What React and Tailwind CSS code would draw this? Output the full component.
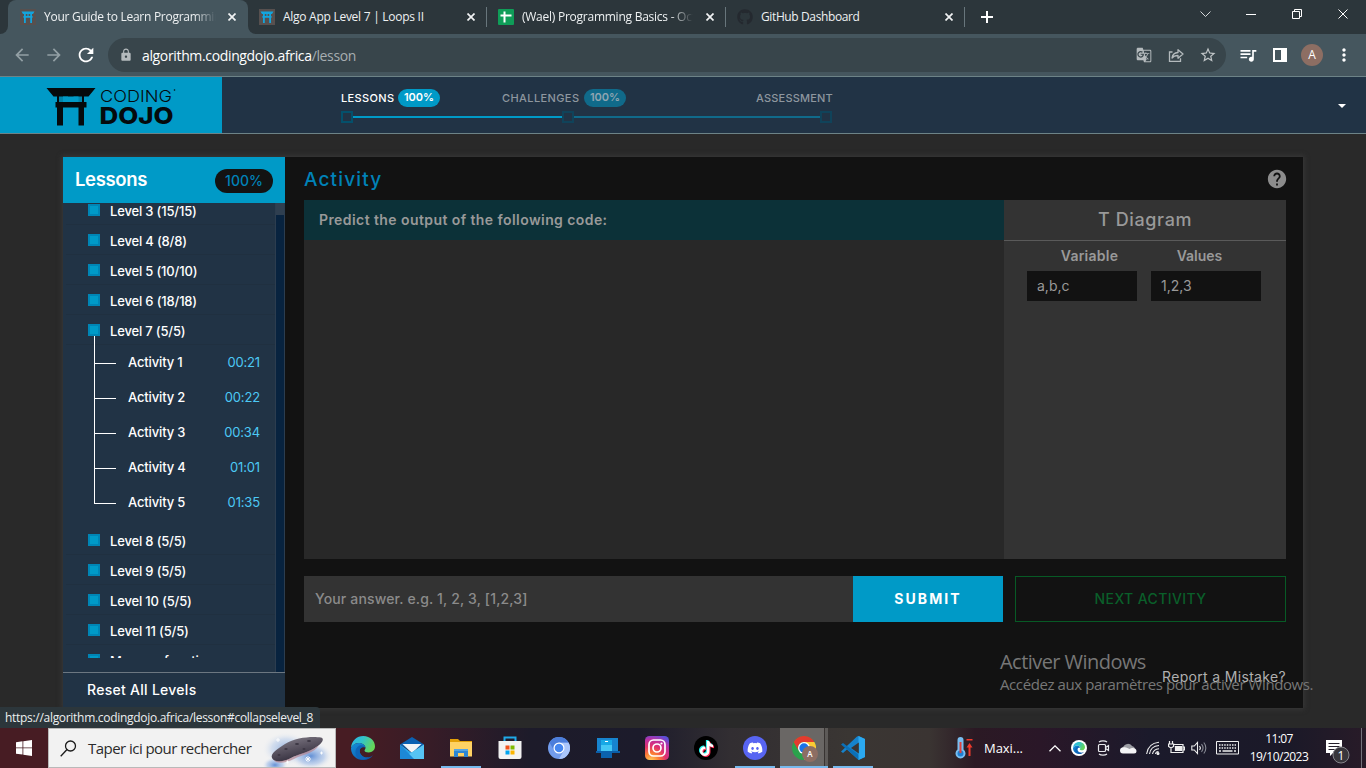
import React from "react";
import { MdArrowBack, MdArrowForward, MdRefresh, MdLock, MdGTranslate, MdStarBorder, MdQueueMusic, MdMoreVert, MdHelp } from "react-icons/md";
import { FaDiscord, FaGithub, FaTiktok } from "react-icons/fa6";

const SEGOE = "font-['Open_Sans','Noto_Sans',sans-serif]";
const GOTHAM = "font-[Inter,sans-serif]";

function Close() {
  return (
    <svg width="8" height="8" viewBox="0 0 8 8" className="shrink-0" stroke="#f1f3f4" strokeWidth="1.7">
      <path d="M.5 .5l7 7M7.5 .5l-7 7" />
    </svg>
  );
}

function ToriiFavicon() {
  return (
    <svg width="16" height="16" viewBox="0 0 16 16" className="shrink-0">
      <rect width="16" height="16" fill="#57504f" />
      <path d="M1.5 2.6h13L13 5H3zM4 5h1.8v9H4zM10.2 5H12v9h-1.800zM3.400 7h9.200v1.700H3.400zM7.400 4.500h1.200V7.500H7.400z" fill="#12a5dd" />
    </svg>
  );
}

function SheetFavicon() {
  return (
    <svg width="16" height="16" viewBox="0 0 16 16" className="shrink-0">
      <rect width="16" height="16" rx="1" fill="#0f9d58" />
      <path d="M2.500 6.500h11M6.500 2.500v11" stroke="#fff" strokeWidth="2" />
    </svg>
  );
}

function TabStrip() {
  return (
    <div className={`flex h-[34px] bg-[#2c363b] ${SEGOE} text-[12px] leading-[16px] text-[#eef1f2]`}>
      <div className="flex w-2 items-end bg-[#45565e]">
        <div className="h-full w-full rounded-br-lg bg-[#2c363b]" />
      </div>
      <div className="flex w-60 items-center rounded-t-lg bg-[#45565e] pl-3">
        <ToriiFavicon />
        <div className="ml-2 mr-[12px] w-[172px] overflow-hidden whitespace-nowrap tracking-[-0.27px] [mask-image:linear-gradient(to_right,#000_150px,transparent_172px)]">
          Your Guide to Learn Programming
        </div>
        <Close />
      </div>
      <div className="bg-[#45565e]">
        <div className="h-full w-2 rounded-bl-lg bg-[#2c363b]" />
      </div>
      <div className="flex w-[230px] items-center pl-[3px]">
        <ToriiFavicon />
        <div className="ml-2 w-[184px] whitespace-nowrap tracking-[-0.27px]">Algo App Level 7 | Loops II</div>
        <Close />
      </div>
      <div className="mt-[7px] h-5 w-px bg-[#68767c]" />
      <div className="flex w-[238px] items-center pl-[11px]">
        <SheetFavicon />
        <div className="ml-2 mr-[13px] w-[171px] overflow-hidden whitespace-nowrap tracking-[-0.25px] [mask-image:linear-gradient(to_right,#000_148px,transparent_171px)]">
          (Wael) Programming Basics - October
        </div>
        <Close />
      </div>
      <div className="mt-[7px] h-5 w-px bg-[#68767c]" />
      <div className="flex w-[238px] items-center pl-[11px]">
        <FaGithub className="size-4 shrink-0 text-[#24292f]" />
        <div className="ml-2 mr-[13px] w-[171px] whitespace-nowrap tracking-[-0.38px]">GitHub Dashboard</div>
        <Close />
      </div>
      <div className="mt-[7px] h-5 w-px bg-[#68767c]" />
      <svg width="12" height="12" viewBox="0 0 12 12" className="ml-4 mt-[11px]" stroke="#fff" strokeWidth="2">
        <path d="M6 0v12M0 6h12" />
      </svg>
      <svg width="170" height="34" viewBox="0 0 170 34" className="ml-auto" fill="none" stroke="#fff" strokeWidth="1">
        <path d="M4.500 11.500l5 5 5-5" stroke="#d5d8da" />
        <path d="M50 14.500h10" />
        <path d="M96.500 11.500h7v7h-7zM98.500 11.500v-2h7v7h-2" />
        <path d="M142.500 9.500l9 9M151.500 9.500l-9 9" />
      </svg>
    </div>
  );
}

function Toolbar() {
  return (
    <div className={`flex h-[42px] items-center bg-[#45565e] ${SEGOE}`}>
      <MdArrowBack className="ml-3 size-[20px] text-[#93a0a5]" />
      <MdArrowForward className="ml-3 size-[20px] text-[#93a0a5]" />
      <MdRefresh className="ml-[11px] size-[22px] text-white" />
      <div className="ml-[11px] flex h-[34px] w-[1118px] items-center rounded-full bg-[#38454b] pl-[11px]">
        <MdLock className="size-[14px] text-[#b4babd]" />
        <div className="ml-[9px] text-[14px] tracking-[-0.35px] text-white">
          algorithm.codingdojo.africa<span className="text-[#a7aeb1]">/lesson</span>
        </div>
        <MdGTranslate className="ml-auto size-4 text-[#b4babd]" />
        <svg width="16" height="16" viewBox="0 0 16 16" className="ml-[16px]" fill="none" stroke="#b4babd" strokeWidth="1.300">
          <path d="M4.500 5H1.500v9.300h11v-3" />
          <path d="M4 11c.5-3.800 2.500-5.300 6-5.500V2.700l5 4.300-5 4.200V8.500C7.500 8.500 5.500 9 4 11z" strokeLinejoin="round" />
        </svg>
        <MdStarBorder className="ml-[15px] mr-[9px] size-[18px] text-[#c0c5c7]" />
      </div>
      <MdQueueMusic className="ml-[12px] size-[20px] text-white" />
      <div className="ml-[15px] flex h-[14px] w-[14px] justify-end border-2 border-white">
        <div className="h-full w-[4px] bg-white" />
      </div>
      <div className="ml-[14px] flex size-[22px] items-center justify-center rounded-full bg-[#8d6e63] text-[12px] text-white">A</div>
      <MdMoreVert className="ml-[11px] size-[20px] text-white" />
    </div>
  );
}

function DojoLogo() {
  return (
    <svg width="222" height="56" viewBox="0 0 222 56" fontFamily="Inter, sans-serif" fill="#050a0c">
      <path d="M46.500 11h49l-7 8.500h-35zM57 19h6v29.500h-6zM78.500 19H84v29.500h-5.500zM55.500 25h31v5.500h-31z" />
      <path d="M59 19.500h9v5.500h-9zM73.500 19.500h8.500v5.500h-8.500z" fill="#009ac7" opacity=".85" />
      <text x="100" y="25" fontSize="16.500" textLength="72" lengthAdjust="spacingAndGlyphs" fontWeight="300">CODING</text>
      <text x="99.500" y="47" fontSize="23.500" textLength="74" lengthAdjust="spacingAndGlyphs" fontWeight="800">DOJO</text>
      <circle cx="174.500" cy="13" r=".8" />
    </svg>
  );
}

function Node({ className }) {
  return <div className={`size-3 border-2 ${className}`} />;
}

function SiteHeader() {
  return (
    <div className={`flex h-[58px] border-y border-[#6d8387] bg-[#213345] ${GOTHAM}`}>
      <div className="w-[222px] bg-[#009ac7]"><DojoLogo /></div>
      <div className="w-[492px] ml-[119px] pt-[12px]">
        <div className="flex h-[18px] items-center text-[11px] font-medium leading-[18px]">
          <span className="w-[57px] whitespace-nowrap tracking-[0.35px] text-white">LESSONS</span>
          <span className="w-[42px] rounded-full bg-[#009ac7] text-center font-semibold leading-[17px] pb-px text-white">100%</span>
          <span className="ml-[62px] w-[82px] whitespace-nowrap tracking-[0.4px] text-[#8e979f]">CHALLENGES</span>
          <span className="w-[42px] rounded-full bg-[#106a8a] text-center font-semibold leading-[17px] pb-px text-[#8fa5b1]">100%</span>
          <span className="ml-auto whitespace-nowrap tracking-[0.2px] text-[#8e979f]">ASSESSMENT</span>
        </div>
        <div className="mt-[4px] flex w-[491px] items-center">
          <Node className="border-[#04506b]" />
          <div className="h-[2px] w-[209px] bg-[#009ac7]" />
          <Node className="border-[#10435a]" />
          <div className="h-[2px] w-[247px] bg-[#106a8a]" />
          <Node className="border-[#10435a]" />
        </div>
      </div>
      <svg width="8" height="4" viewBox="0 0 8 4" className="ml-auto mr-5 mt-[27px]"><path d="M0 0h8L4 4z" fill="#fff" /></svg>
    </div>
  );
}

function Level({ children }) {
  return (
    <div className="ml-[3px] flex h-[30px] shrink-0 border-b border-[#203040] pl-[22px] pt-[9px]">
      <div className="size-3 border-2 border-[#0085b5] bg-[#009ac7]" />
      <span className="ml-[10px] whitespace-nowrap text-[13px] font-medium leading-[14px] tracking-[-0.17px] text-white">{children}</span>
    </div>
  );
}

const ACTIVITIES = [["Activity 1", "00:21"], ["Activity 2", "00:22"], ["Activity 3", "00:34"], ["Activity 4", "01:01"], ["Activity 5", "01:35"]];

function Sidebar() {
  return (
    <div className="flex w-[222px] flex-col bg-[#213345]">
      <div className="flex h-[46px] shrink-0 items-center justify-between bg-[#009ac7] pl-[12px] pr-[12px]">
        <span className="text-[18.500px] font-semibold tracking-[-0.35px] text-white">Lessons</span>
        <span className="mt-[2px] h-6 w-[58px] rounded-full bg-[#131313] text-center text-[14px] font-medium leading-6 text-[#0082b8]">100%</span>
      </div>
      <div className="flex h-[469px]">
        <div className="flex h-[455px] w-[212px] flex-col overflow-hidden">
          <div className="-mt-2 flex flex-col">
            <Level>Level 3 (15/15)</Level>
            <Level>Level 4 (8/8)</Level>
            <Level>Level 5 (10/10)</Level>
            <Level>Level 6 (18/18)</Level>
            <Level>Level 7 (5/5)</Level>
            <div className="flex h-[180px] pl-[31px]">
              <div className="-mt-[9px] w-[22px]">
                <div className="h-[28px] border-b border-l border-white" />
                {[2, 3, 4, 5].map((n) => <div key={n} className="h-[35px] border-b border-l border-white" />)}
              </div>
              <div className="flex-1 pl-[12px] pr-[15px]">
                {ACTIVITIES.map(([name, time]) => (
                  <div key={name} className="flex h-[35px] items-center justify-between pt-px text-[13px] font-medium tracking-[-0.15px] text-white">
                    <span>{name}</span>
                    <span className="font-normal text-[#4cc9f5]">{time}</span>
                  </div>
                ))}
              </div>
            </div>
            <Level>Level 8 (5/5)</Level>
            <Level>Level 9 (5/5)</Level>
            <Level>Level 10 (5/5)</Level>
            <Level>Level 11 (5/5)</Level>
            <Level>Memory functi</Level>
          </div>
        </div>
        <div className="w-[10px] border-x border-[#2c3d4f] bg-[#08233f]">
          <div className="h-3 bg-[#2f3f50]" />
        </div>
      </div>
      <div className="flex flex-1 items-center border-t border-[#6c7781] pb-[2px] pl-6 text-[14px] font-medium tracking-[0.28px] text-white">Reset All Levels</div>
    </div>
  );
}

function Workspace() {
  return (
    <div className="flex flex-1 flex-col bg-[#121212] pl-[19px] pr-[17px]">
      <div className="flex h-[43px] items-center justify-between">
        <h1 className="pt-[3px] text-[19px] font-medium tracking-[1.150px] text-[#0082b8]">Activity</h1>
        <MdHelp className="-mr-[2px] size-[22px] text-[#8c8c8c]" />
      </div>
      <div className="flex h-[359px]">
        <div className="w-[700px] bg-[#282828]">
          <div className="flex h-[40px] items-center bg-[#0c3138] pb-[2px] pl-[15px] text-[14px] font-semibold tracking-[0.42px] text-[#999]">
            Predict the output of the following code:
          </div>
        </div>
        <div className="flex-1 bg-[#333]">
          <div className="flex h-[41px] items-center justify-center border-b border-[#5a5a5a] pb-[2px] text-[18px] font-medium tracking-[0.63px] text-[#999]">T Diagram</div>
          <div className="grid grid-cols-[110px_110px] gap-x-[14px] pl-[23px] text-[14px] text-[#999]">
            <div className="h-[30px] pl-[15px] text-center font-semibold leading-[30px] tracking-[0.250px]">Variable</div>
            <div className="h-[30px] pr-[13px] text-center font-semibold leading-[30px]">Values</div>
            <div className="h-[30px] bg-[#121212] pl-[10px] leading-[30px]">a,b,c</div>
            <div className="h-[30px] bg-[#121212] pl-[10px] leading-[30px]">1,2,3</div>
          </div>
        </div>
      </div>
      <div className="mt-[17px] flex h-[46px] text-[14px]">
        <div className="flex w-[549px] items-center bg-[#333] pb-[2px] pl-[11px] font-medium tracking-[0.15px] text-[#8b8b8b]">Your answer. e.g. 1, 2, 3, [1,2,3]</div>
        <div className="flex w-[150px] items-center justify-center bg-[#009ac7] pb-[2px] font-bold tracking-[2.100px] text-white">SUBMIT</div>
        <div className="ml-3 flex flex-1 items-center justify-center border border-[#075a25] pb-[2px] font-medium tracking-[0.4px] text-[#0a5f2a]">NEXT ACTIVITY</div>
      </div>
      <div className="mt-[45px] text-right text-[14px] leading-5 tracking-[0.330px] text-[#b0b0b0]">Report a Mistake?</div>
    </div>
  );
}

function EdgeIcon({ size = 24 }) {
  return (
    <svg width={size} height={size} viewBox="0 0 24 24">
      <defs>
        <linearGradient id="edgeTop" x1="0" x2="1" y1="0" y2=".4"><stop offset="0" stopColor="#27b3ec" /><stop offset=".5" stopColor="#33c3c8" /><stop offset="1" stopColor="#64d65a" /></linearGradient>
        <linearGradient id="edgeLow" x1="0" x2="1" y1="0" y2="1"><stop offset="0" stopColor="#1592dc" /><stop offset="1" stopColor="#0b4aa0" /></linearGradient>
      </defs>
      <path d="M0 12C.5 4.500 6 0 12.200 0 19.500 0 24 5.200 24 10.300c0 4-3 6.200-6.200 6.200-2.800 0-4.300-1-4.300-2 0-.7 1-1 1-2.700C14.500 9.500 11.500 7 8 7 4 7 1.500 9 0 12z" fill="url(#edgeTop)" />
      <path d="M0 12c1.500-3.200 4.600-5 8-5 3.600 0 6.200 2.200 6.400 4.600C12.500 10 9 11 8.700 14.500c-.3 4 4 7.800 9 6.800 1.700-.3 3.300-1.300 4.200-2C20 22.300 16.500 24 12 24 5.300 24-.2 18.800 0 12z" fill="url(#edgeLow)" />
      <path d="M8.700 14.500c-.3 4 4 7.800 9 6.800-3.300 2.500-8.200 3-11.200-.1C3.400 18 3.800 12.500 8 9.800c2-.9 4.900-.5 6.400 1.800C12 10.500 9 11.500 8.700 14.500z" fill="#0d65b8" />
    </svg>
  );
}

function MailIcon() {
  return (
    <svg width="24" height="24" viewBox="0 0 24 24">
      <path d="M0 8.500L12 1l12 7.500L12 16z" fill="#0b61b2" />
      <path d="M2.500 8h19L12 17z" fill="#f3f5f7" />
      <path d="M0 8.500L12 17l12-8.500V23H0z" fill="#2ba5e8" />
      <path d="M24 8.500V23H1z" fill="#56c4f4" /><path d="M0 8.500L14 23H0z" fill="#1d88d6" />
    </svg>
  );
}

function FolderIcon() {
  return (
    <svg width="22" height="20" viewBox="0 0 22 20">
      <path d="M0 1h8l2 2h12v6H0z" fill="#e3a008" /><path d="M0 4h22v14.500H0z" fill="#ffd264" />
      <path d="M4 11h14v8h-4v-4H8v4H4z" fill="#2f87d4" /><path d="M4 11h14v2H4z" fill="#56a5e2" />
    </svg>
  );
}

function StoreIcon() {
  return (
    <svg width="24" height="24" viewBox="0 0 24 24">
      <path d="M6.500 7V1.500h11V7" fill="none" stroke="#1fa9e8" strokeWidth="2" />
      <path d="M.5 5h23v16a2 2 0 0 1-2 2h-19a2 2 0 0 1-2-2z" fill="#f2f2f2" />
      <path d="M7.500 9.500h4v4h-4z" fill="#f1511b" /><path d="M12.500 9.500h4v4h-4z" fill="#7fba00" /><path d="M7.500 14.500h4v4h-4z" fill="#00a4ef" /><path d="M12.500 14.500h4v4h-4z" fill="#fbb500" />
    </svg>
  );
}

function ChromeIcon({ red, green, yellow, hub, size }) {
  return (
    <svg width={size} height={size} viewBox="0 0 24 24">
      <circle cx="12" cy="12" r="12" fill={green} />
      <path d="M12 24A12 12 0 0 0 22.400 6H12l5.200 9z" fill={yellow} />
      <path d="M1.600 6A12 12 0 0 1 22.400 6H12a6 6 0 0 0-5.200 9z" fill={red} />
      <circle cx="12" cy="12" r="6" fill="#fff" /><circle cx="12" cy="12" r="4.700" fill={hub} />
    </svg>
  );
}

function PhoneLinkIcon() {
  return (
    <svg width="24" height="22" viewBox="0 0 24 22">
      <path d="M1 1h21v13H1z" fill="#1784cf" /><path d="M0 14h12v2H0z" fill="#0b5ea8" /><path d="M16 14h8v2h-8z" fill="#0b5ea8" />
      <path d="M5 3h11v18H5z" fill="#18a9e6" /><path d="M5 8h11v6H5z" fill="#45c8f5" /><path d="M5 14h11v7H5z" fill="#0b62ad" /><path d="M9 4h3v1H9z" fill="#fff" />
    </svg>
  );
}

function InstagramIcon() {
  return (
    <svg width="24" height="24" viewBox="0 0 24 24">
      <defs><radialGradient id="insta" cx=".25" cy="1.050" r="1.150"><stop offset="0" stopColor="#ffd45c" /><stop offset=".3" stopColor="#fb7a35" /><stop offset=".55" stopColor="#e0316e" /><stop offset=".8" stopColor="#b931a5" /><stop offset="1" stopColor="#5b4fd8" /></radialGradient></defs>
      <rect width="24" height="24" rx="4.500" fill="url(#insta)" />
      <g fill="none" stroke="#fff" strokeWidth="1.700"><rect x="4" y="4" width="16" height="16" rx="4.500" /><circle cx="12" cy="12" r="4" /></g>
      <circle cx="16.500" cy="7.500" r="1.100" fill="#fff" />
    </svg>
  );
}

function VsCodeIcon() {
  return (
    <svg width="24" height="24" viewBox="0 0 24 24">
      <path d="M17.500 0L24 3v18l-6.500 3L6 13.500 2 17l-2-1.500 16-15z" fill="#1683cc" />
      <path d="M0 8.500L2 7l16 12v5L6 13.500z" fill="#0b70b8" />
      <path d="M17.500 0L24 3v18l-6.500 3z" fill="#2ba9f0" /><path d="M17.800 6.500v11L10 12z" fill="#3a3533" />
    </svg>
  );
}

function Slot({ children, bar }) {
  return (
    <div className="flex h-10 w-[49px] flex-col items-center">
      <div className="flex h-[38px] items-center pt-[2px]">{children}</div>
      {bar && <div className="h-[2px] w-10 bg-[#76b9ed]" />}
    </div>
  );
}

function SearchBox() {
  return (
    <div className="flex h-10 w-[288px] items-center border border-[#b9b9b9] bg-[#f2f2f2] pl-[11px]">
      <svg width="17" height="17" viewBox="0 0 17 17" fill="none" stroke="#1b1b1b" strokeWidth="1.300"><circle cx="10.500" cy="6" r="5" /><path d="M7 9.500L.7 16.300" /></svg>
      <span className="ml-[11px] whitespace-nowrap text-[15px] tracking-[-0.54px] text-[#2b2b2b]">Taper ici pour rechercher</span>
      <svg width="74" height="38" viewBox="0 0 74 38" className="ml-auto">
        <defs>
          <radialGradient id="glow"><stop offset="0" stopColor="#4a7fd0" stopOpacity=".85" /><stop offset=".6" stopColor="#93b4e6" stopOpacity=".5" /><stop offset="1" stopColor="#f2f2f2" stopOpacity="0" /></radialGradient>
          <linearGradient id="rock" x1="0" y1="0" x2=".5" y2="1"><stop offset="0" stopColor="#8a8691" /><stop offset=".5" stopColor="#5c5663" /><stop offset="1" stopColor="#302b3a" /></linearGradient>
        </defs>
        <ellipse cx="25" cy="20" rx="24" ry="17" fill="url(#glow)" opacity=".65" /><ellipse cx="50" cy="27" rx="22" ry="14" fill="url(#glow)" />
        <ellipse cx="14" cy="36" rx="13" ry="8" fill="url(#glow)" />
        <path d="M11 29c-2-5 6-9 13-14C35 8 52 7 60 8.500c4 1 1 6-4 9C47 24 38 25 30 29c-7 4-17 5-19 0z" fill="url(#rock)" />
        <path d="M12 30c3 4 12 2 18-1 9-5 20-6 28-13-5 9-16 9-25 14-8 4-18 6-21 0z" fill="#b9838c" opacity=".65" />
        <g fill="#3c3744"><ellipse cx="25" cy="20" rx="1.700" ry="1" /><ellipse cx="36" cy="15" rx="2" ry="1" /><ellipse cx="48" cy="12" rx="2" ry=".9" /><ellipse cx="43" cy="20" rx="1.500" ry="1" /><ellipse cx="18" cy="26" rx="1.500" ry="1" /></g>
        <g stroke="#fff" strokeWidth=".9"><path d="M44 30h6M47 27v6M45 28l4 4M49 28l-4 4M15 11h4M17 9v4M25 33h3M26.500 31.500v3M59 24h3M60.500 22.500v3" /></g>
      </svg>
    </div>
  );
}

function Tray() {
  return (
    <>
      <svg width="18" height="22" viewBox="0 0 18 22" className="mt-[9px]">
        <path d="M2.500 3a2.800 2.800 0 0 1 6 0v9.500a5 5 0 1 1-6 0z" fill="#79bdf0" /><circle cx="5.500" cy="16.500" r="3" fill="#1f7fd2" /><path d="M4.500 5h2v11h-2z" fill="#e0403c" />
        <path d="M11.500 2h6v1.500h-6zM14.500 6l3 4.500h-2V19h-2v-8.500h-2z" fill="#f03a2c" />
      </svg>
      <span className="ml-[11px] w-[40px] whitespace-nowrap text-[13px] leading-[40px] tracking-[-0.05px] text-white">Maxi...</span>
      <svg width="12" height="7" viewBox="0 0 12 7" className="ml-[25px] mt-[17px]" fill="none" stroke="#fff" strokeWidth="1.300"><path d="M.5 6.300L6 .9l5.500 5.400" /></svg>
      <div className="ml-[10px] mt-3 flex size-4 items-center justify-center rounded-full bg-white"><EdgeIcon size={12} /></div>
      <svg width="14" height="16" viewBox="0 0 14 16" className="ml-[10px] mt-3" fill="none" stroke="#e8e8ec" strokeWidth="1.200">
        <rect x="1.500" y="4.500" width="7" height="7" rx="1" /><path d="M8.500 7.500l3-2v5l-3-2M2 2C4 .4 8 .4 10 2M2 14c2 1.600 6 1.600 8 0" />
      </svg>
      <svg width="17" height="12" viewBox="0 0 17 12" className="ml-[9px] mt-[14px]">
        <path d="M3.500 11a3.500 3.500 0 0 1 0-6.500A5 5 0 0 1 12 4a3.700 3.700 0 0 1 1 7z" fill="#9c9da3" /><path d="M3 11.500a3 3 0 0 1 0-6c3-1 5 1 6.500 1.500C12 5 16.500 6 16.500 9a2.500 2.500 0 0 1-2.500 2.500z" fill="#f4f4f5" />
      </svg>
      <svg width="14" height="14" viewBox="0 0 14 14" className="ml-[9px] mt-[13px]" fill="none" stroke="#eee" strokeWidth="1.100">
        <path d="M.6 13C1.500 6.500 6 2 13 1.300M3.500 13c.6-4.800 4-8 9.500-8.500M6.500 13c.5-3 2.700-5 6.500-5.300" /><path d="M9.500 13a3 3 0 0 1 3-2.500" /><circle cx="12" cy="12.500" r="1" fill="#fff" />
      </svg>
      <svg width="17" height="14" viewBox="0 0 17 14" className="ml-[8px] mt-[13px]" fill="none" stroke="#eee" strokeWidth="1.200">
        <path d="M6 3.500h9v8H5M15.500 6h1v3h-1M1.500 0v3M4.500 0v3M.6 3h5v2.500L3 7 .6 5.500zM3 7v4.500h3" /><path d="M7.500 5.500h6v4h-6z" fill="#eee" />
      </svg>
      <svg width="17" height="14" viewBox="0 0 17 14" className="ml-[6px] mt-[13px]" fill="none" stroke="#eee" strokeWidth="1.100">
        <path d="M.8 5h2.500L6.500 1.500v11L3.300 9H.8zM8.500 5a3 3 0 0 1 0 4" /><path d="M10.500 3.200a6 6 0 0 1 0 7.600M12.800 1.500a8.500 8.500 0 0 1 0 11" stroke="#888a94" />
      </svg>
      <svg width="23" height="14" viewBox="0 0 23 14" className="ml-[8px] mt-[13px]" fill="none" stroke="#eee">
        <path d="M.5 .5h22v12.500H.5z" /><path d="M3 4h17M3 7h17" strokeDasharray="1.500 1.100" strokeWidth="1.300" /><path d="M3 10h2M6.500 10h10M18 10h2" strokeWidth="1.300" />
      </svg>
      <div className="ml-[5px] flex w-[70px] flex-col items-center pt-[2px] text-[12px] leading-[18px] tracking-[-0.6px] text-white"><span>11:07</span><span className="tracking-[-0.5px]">19/10/2023</span></div>
      <svg width="26" height="26" viewBox="0 0 26 26" className="ml-[11px] mt-[11px]">
        <path d="M1 1h16v13H8l-3 3v-3H1z" fill="#fff" /><path d="M3.500 4.500h11M3.500 7.500h11M3.500 10.500h6" stroke="#25202c" />
        <circle cx="16" cy="16" r="8" fill="#38363c" stroke="#85848a" /><text x="16" y="20.500" fontSize="12" textAnchor="middle" fill="#fff">1</text>
      </svg>
      <div className="ml-auto mr-1 h-10 w-px bg-[#74717a]" />
    </>
  );
}

function Taskbar() {
  return (
    <div className={`flex h-10 ${SEGOE} bg-[linear-gradient(90deg,#471c23_0px,#471c23_350px,#371c27_430px,#1d1b2a_530px,#1c1b2b_640px,#322e32_730px,#3a3633_850px,#3a3432_930px,#2b1924_975px,#2a1728_1040px,#1b1a2b_1150px,#1b1928_1290px,#281b28_1366px)]`}>
      <div className="flex w-12 items-center justify-center">
        <svg width="16" height="16" viewBox="0 0 16 16" fill="#fff"><path d="M0 2.200l6.500-.9v6.200H0zM7.300 1.200L16 0v7.500H7.300zM0 8.300h6.500v6.300L0 13.700zM7.300 8.300H16V16l-8.700-1.200z" /></svg>
      </div>
      <SearchBox />
      <div className="ml-[2px] flex">
        <Slot><EdgeIcon /></Slot>
        <Slot><MailIcon /></Slot>
        <Slot bar><FolderIcon /></Slot>
        <Slot><StoreIcon /></Slot>
        <Slot><ChromeIcon size={22} red="#4c7edb" green="#729cec" yellow="#aac6fb" hub="#4687f0" /></Slot>
        <Slot><PhoneLinkIcon /></Slot>
        <Slot><InstagramIcon /></Slot>
        <Slot>
          <div className="relative flex size-6 items-center justify-center rounded-full bg-black">
            <FaTiktok className="absolute left-[4px] top-[4px] size-[15px] text-[#25f4ee]" />
            <FaTiktok className="absolute left-[6px] top-[6px] size-[15px] text-[#fe2c55]" />
            <FaTiktok className="absolute left-[5px] top-[5px] size-[15px] text-white" />
          </div>
        </Slot>
        <Slot bar><div className="flex size-6 items-center justify-center rounded-full bg-[#5865f2]"><FaDiscord className="size-4 text-white" /></div></Slot>
        <div className="ml-px flex h-10 w-[48px] border-b-2 border-[#76b9ed]">
          <div className="relative flex w-[44px] items-center justify-center bg-[#6a6765] pr-0 pl-[4px] pt-[2px]">
            <ChromeIcon size={24} red="#e33b2e" green="#2ba24c" yellow="#fcc934" hub="#1a73e8" />
            <div className="absolute left-[22px] top-[18px] flex size-4 items-center justify-center rounded-full bg-[#8d6e63] text-[8px] font-semibold text-white">A</div>
          </div>
          <div className="ml-px w-[3px] bg-[#5d5a58]" />
        </div>
        <Slot bar><VsCodeIcon /></Slot>
      </div>
      <div className="ml-auto flex w-[411px]"><Tray /></div>
    </div>
  );
}

export default function App() {
  return (
    <div className="relative flex h-[768px] w-[1366px] flex-col overflow-hidden bg-[#292929]">
      <TabStrip />
      <Toolbar />
      <SiteHeader />
      <main className={`h-[594px] pl-[63px] pt-[23px] ${GOTHAM}`}>
        <div className="flex h-[551px] w-[1240px] shadow-[0_0_5px_1px_#3a3a3a]">
          <Sidebar />
          <Workspace />
        </div>
      </main>
      <Taskbar />
      <div className={`absolute bottom-10 left-0 flex h-[21px] w-[320px] items-center whitespace-nowrap rounded-tr bg-[#2c363b] pl-[5px] text-[12px] tracking-[-0.3px] text-[#eceff0] ${SEGOE}`}>
        https://algorithm.codingdojo.africa/lesson#collapselevel_8
      </div>
      <div className={`absolute left-[1000px] top-[649px] whitespace-nowrap text-[#777] ${SEGOE}`}>
        <div className="text-[20px] leading-[26px] tracking-[-0.55px]">Activer Windows</div>
        <div className="-mt-px text-[15px] leading-[20px] tracking-[-0.41px]">Accédez aux paramètres pour activer Windows.</div>
      </div>
    </div>
  );
}
